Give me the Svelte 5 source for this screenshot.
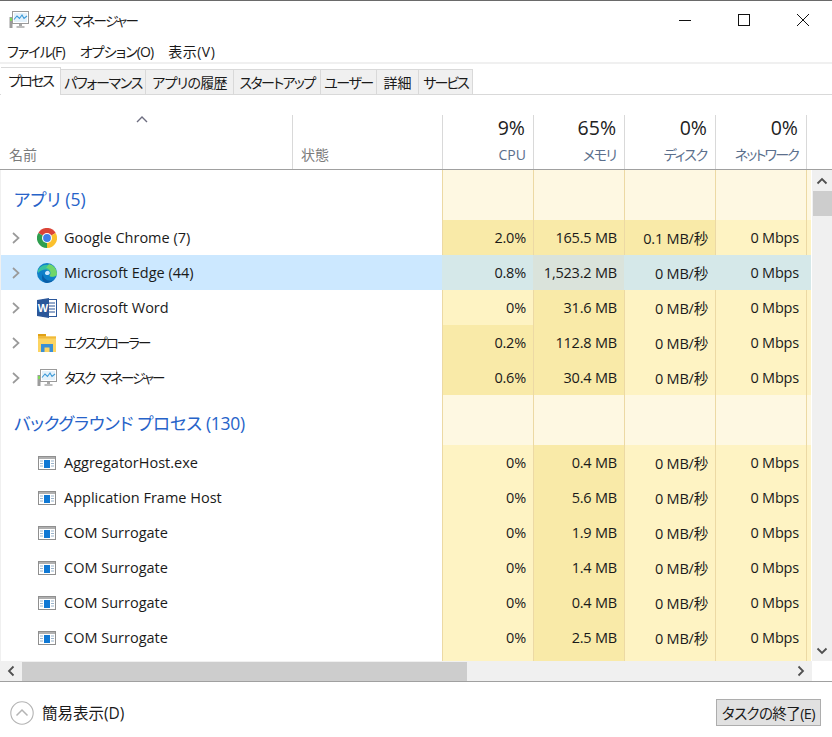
<script lang="ts">
  // widths and tracking per tab: the kana here run narrower than Noto's
  const tabs = [
    { label: "プロセス", width: 60, track: -2 },
    { label: "パフォーマンス", width: 85, track: -1.3 },
    { label: "アプリの履歴", width: 88, track: -0.7 },
    { label: "スタートアップ", width: 87, track: -1.6 },
    { label: "ユーザー", width: 56, track: -1.5 },
    { label: "詳細", width: 42, track: 0 },
    { label: "サービス", width: 54, track: -2 }
  ];

  const menus = [
    { label: "ファイル(F)", track: -0.9 },
    { label: "オプション(O)", track: -0.9 },
    { label: "表示(V)", track: 0.5 }
  ];

  const columns = [
    { pct: "9%", label: "CPU", track: 0, nudge: -1 },
    { pct: "65%", label: "メモリ", track: -1.3, nudge: 0 },
    { pct: "0%", label: "ディスク", track: -1.2, nudge: 0 },
    { pct: "0%", label: "ネットワーク", track: -1.8, nudge: 0 }
  ];

  const apps = [
    { name: "Google Chrome (7)", icon: "chrome", cpu: "2.0%", mem: "165.5 MB", disk: "0.1 MB/秒", hotCpu: true, hotDisk: true },
    { name: "Microsoft Edge (44)", icon: "edge", cpu: "0.8%", mem: "1,523.2 MB", disk: "0 MB/秒", selected: true },
    { name: "Microsoft Word", icon: "word", cpu: "0%", mem: "31.6 MB", disk: "0 MB/秒" },
    { name: "エクスプローラー", icon: "folder", cpu: "0.2%", mem: "112.8 MB", disk: "0 MB/秒", hotCpu: true, kana: true },
    { name: "タスク マネージャー", icon: "taskmgr", cpu: "0.6%", mem: "30.4 MB", disk: "0 MB/秒", hotCpu: true, kana: true }
  ];

  const background = [
    { name: "AggregatorHost.exe", mem: "0.4 MB" },
    { name: "Application Frame Host", mem: "5.6 MB" },
    { name: "COM Surrogate", mem: "1.9 MB" },
    { name: "COM Surrogate", mem: "1.4 MB" },
    { name: "COM Surrogate", mem: "0.4 MB" },
    { name: "COM Surrogate", mem: "2.5 MB" }
  ];
</script>

{#snippet taskIcon()}
  <svg width="20" height="20" viewBox="0 0 20 20">
    <rect x="3.5" y="1.5" width="16" height="12" fill="#fff" stroke="#9a9a9a" />
    <rect x="5" y="3" width="13" height="9" fill="#e3f1fb" />
    <polyline points="5,9.5 8,6 10.5,8.5 13,5 15,8.5 18,6" fill="none" stroke="#3c9ad8" stroke-width="1.1" />
    <rect x="10" y="14" width="3" height="2" fill="#a8a8a8" />
    <rect x="7.5" y="16" width="8" height="2" fill="#bdbdbd" />
    <rect x="0.5" y="7" width="3" height="11" fill="#9c9c9c" />
    <rect x="1" y="8" width="2" height="3" fill="#7ed957" />
  </svg>
{/snippet}

{#snippet appIcon(kind)}
  {#if kind === "chrome"}
    <svg width="20" height="20" viewBox="0 0 20 20">
      <path d="M10 10 L1.3 5 A10 10 0 0 1 18.7 5 Z" fill="#db4437" />
      <path d="M10 10 L18.7 5 A10 10 0 0 1 10 20 Z" fill="#fbc02d" />
      <path d="M10 10 L10 20 A10 10 0 0 1 1.3 5 Z" fill="#2e9e4f" />
      <circle cx="10" cy="10" r="5" fill="#fff" />
      <circle cx="10" cy="10" r="3.9" fill="#3f7fe8" />
    </svg>
  {:else if kind === "edge"}
    <svg width="20" height="20" viewBox="0 0 20 20">
      <circle cx="10" cy="10" r="10" fill="#0f7fc9" />
      <path d="M1 7 A10 10 0 0 1 19.8 11.5 C19 14 14 14.5 12.5 13 C15 11 13 6.5 9 6.5 C5.5 6.5 3 8 1 10 Z" fill="#35c1a0" />
      <path d="M12 1 A10 10 0 0 1 20 11 C19.5 13.5 15 14.5 12.5 13 C15 10 13 5 9 5 Z" fill="#6fd66a" />
      <path d="M8 10.5 C8 8.5 10 7.5 11.5 8 C13 8.7 13.3 10.5 12 11.5 C10.5 12.5 8 12 8 10.5 Z" fill="#cce8ff" />
      <path d="M6 11 C6 16 11 19 17 17 A10 10 0 0 1 10 20 C6 20 3.5 15 6 11 Z" fill="#0a5ea8" />
    </svg>
  {:else if kind === "word"}
    <svg width="20" height="20" viewBox="0 0 20 20">
      <rect x="6" y="1.5" width="13.5" height="17" fill="#fff" stroke="#2b579a" />
      <path d="M12 5h6M12 8h6M12 11h6M12 14h6" stroke="#2b579a" stroke-width="1.2" />
      <path d="M0 2 L12 0 V20 L0 18 Z" fill="#2b579a" />
      <text x="6" y="14" class="word-letter" text-anchor="middle">W</text>
    </svg>
  {:else if kind === "folder"}
    <svg width="20" height="20" viewBox="0 0 20 20">
      <rect x="1" y="1" width="8" height="4" fill="#e0a116" />
      <rect x="1" y="3.5" width="18" height="15.5" fill="#fcd462" />
      <rect x="1" y="3.5" width="18" height="2" fill="#f0b93a" />
      <path d="M4 15 V11 H16 V19 H12.5 V14.5 H7.5 V19 H4 Z" fill="#3a8fd6" />
    </svg>
  {:else if kind === "taskmgr"}
    {@render taskIcon()}
  {:else}
    <svg width="18" height="14" viewBox="0 0 18 14">
      <rect x="0.5" y="0.5" width="17" height="13" fill="#fff" stroke="#8f8f8f" />
      <rect x="1" y="1" width="16" height="2" fill="#b0b0b0" />
      <rect x="6" y="4" width="6" height="8" fill="#0f78d4" />
      <path d="M2 5h3M2 7.5h3M2 10h3M13 5h3M13 7.5h3M13 10h3" stroke="#9ab4cc" />
    </svg>
  {/if}
{/snippet}

{#snippet cells(row, bg)}
  <div class="cell heat" class:hot={row.hotCpu} class:pale={bg === "group"} class:sel={row.selected}>{row.cpu ?? ""}</div>
  <div class="cell heat" class:hot={bg !== "group"} class:pale={bg === "group"} class:selmem={row.selected}>{row.mem ?? ""}</div>
  <div class="cell heat" class:hot={row.hotDisk} class:pale={bg === "group"} class:sel={row.selected}>{row.disk ?? ""}</div>
  <div class="cell heat" class:pale={bg === "group"} class:sel={row.selected}>{row.net ?? ""}</div>
  <div class="cell heat tail" class:pale={bg === "group"} class:sel={row.selected}></div>
{/snippet}

<div class="window">
  <header class="titlebar">
    <div class="title">
      {@render taskIcon()}
      <span>タスク マネージャー</span>
    </div>
    <div class="controls">
      <button aria-label="最小化"><svg width="12" height="12"><path d="M0 6.5h12" stroke="#111" /></svg></button>
      <button aria-label="最大化"><svg width="12" height="12"><rect x="0.5" y="0.5" width="11" height="11" fill="none" stroke="#111" /></svg></button>
      <button aria-label="閉じる"><svg width="12" height="12"><path d="M0 0l12 12M12 0L0 12" stroke="#111" /></svg></button>
    </div>
  </header>

  <nav class="menubar">
    {#each menus as m}
      <span style="letter-spacing: {m.track}px">{m.label}</span>
    {/each}
  </nav>

  <div class="tabs">
    {#each tabs as t, i}
      <div class="tab" class:active={i === 0} style="width: {t.width}px; letter-spacing: {t.track}px">{t.label}</div>
    {/each}
  </div>

  <div class="table-head">
    <div class="hcol name-col">
      <svg class="sort" width="12" height="7" viewBox="0 0 12 7"><path d="M1 6l5-5 5 5" fill="none" stroke="#6d6d80" stroke-width="1.4" /></svg>
      <span class="hlabel">名前</span>
    </div>
    <div class="hcol state-col"><span class="hlabel">状態</span></div>
    {#each columns as c}
      <div class="hcol metric">
        <span class="pct">{c.pct}</span>
        <span class="hlabel blue" style="letter-spacing: {c.track}px; margin-right: {c.nudge}px">{c.label}</span>
      </div>
    {/each}
    <div class="hend"></div>
  </div>

  <div class="body">
    <div class="list">
      <div class="row group">
        <div class="namecell gtitle">アプリ (5)</div>
        <div class="state"></div>
        {@render cells({}, "group")}
      </div>
      {#each apps as a}
        <div class="row app" class:selected={a.selected}>
          <div class="namecell">
            <svg class="chev" width="8" height="12" viewBox="0 0 8 12"><path d="M1 1l5.5 5L1 11" fill="none" stroke="#9a9a9a" stroke-width="1.7" /></svg>
            <span class="icon">{@render appIcon(a.icon)}</span>
            <span class:kana={a.kana}>{a.name}</span>
          </div>
          <div class="state"></div>
          {@render cells({ ...a, net: "0 Mbps" }, "row")}
        </div>
      {/each}
      <div class="row group">
        <div class="namecell gtitle tight">バックグラウンド プロセス (130)</div>
        <div class="state"></div>
        {@render cells({}, "group")}
      </div>
      {#each background as b}
        <div class="row app">
          <div class="namecell">
            <span class="chev-gap"></span>
            <span class="icon">{@render appIcon("generic")}</span>
            <span>{b.name}</span>
          </div>
          <div class="state"></div>
          {@render cells({ cpu: "0%", mem: b.mem, disk: "0 MB/秒", net: "0 Mbps" }, "row")}
        </div>
      {/each}
      <div class="row filler">
        <div class="namecell"></div>
        <div class="state"></div>
        {@render cells({}, "row")}
      </div>
    </div>

    <div class="vscroll">
      <svg class="arrow" width="12" height="8" viewBox="0 0 12 8"><path d="M1.5 6.5L6 2l4.5 4.5" fill="none" stroke="#505050" stroke-width="1.8" /></svg>
      <div class="vthumb"></div>
      <div class="grow"></div>
      <svg class="arrow" width="12" height="8" viewBox="0 0 12 8"><path d="M1.5 1.5L6 6l4.5-4.5" fill="none" stroke="#505050" stroke-width="1.8" /></svg>
    </div>
  </div>

  <div class="hscroll-row">
    <div class="hscroll">
      <svg class="harrow" width="8" height="12" viewBox="0 0 8 12"><path d="M6.5 1.5L2 6l4.5 4.5" fill="none" stroke="#505050" stroke-width="1.8" /></svg>
      <div class="hthumb"></div>
      <div class="grow"></div>
      <svg class="harrow" width="8" height="12" viewBox="0 0 8 12"><path d="M1.5 1.5L6 6l-4.5 4.5" fill="none" stroke="#505050" stroke-width="1.8" /></svg>
    </div>
  </div>

  <footer class="footer">
    <div class="fewer">
      <svg width="24" height="24" viewBox="0 0 24 24">
        <circle cx="12" cy="12" r="11.2" fill="none" stroke="#b4b4b4" stroke-width="1.1" />
        <path d="M6.5 14.5L12 9l5.5 5.5" fill="none" stroke="#b4b4b4" stroke-width="1.5" />
      </svg>
      <span>簡易表示(D)</span>
    </div>
    <button class="endtask">タスクの終了(E)</button>
  </footer>
</div>

<style>
  :global(body) {
    background: #fff;
    overflow: hidden;
  }

  .window {
    width: 832px;
    height: 737px;
    display: flex;
    flex-direction: column;
    font-family: "Open Sans", "Noto Sans CJK JP", sans-serif;
    font-feature-settings: "palt";
    font-size: 14.5px;
    color: #1a1a1a;
    background: #fff;
    overflow: hidden;
  }

  .titlebar {
    height: 38px;
    flex: none;
    display: flex;
    justify-content: space-between;
    border-top: 1px solid #6a6a6a;
  }

  .title {
    display: flex;
    align-items: center;
    gap: 5px;
    padding-left: 9px;
    font-size: 13.5px;
    letter-spacing: -1.5px;
    word-spacing: 4px;
  }

  .controls {
    display: flex;
  }

  .controls button {
    width: 59px;
    height: 38px;
    border: 0;
    padding: 0;
    background: none;
    display: flex;
    align-items: center;
    justify-content: center;
  }

  .menubar {
    height: 23px;
    flex: none;
    display: flex;
    align-items: center;
    gap: 15px;
    padding-left: 7px;
    font-size: 14px;
    border-bottom: 2px solid #f0f0f0;
  }

  .tabs {
    height: 31px;
    flex: none;
    display: flex;
    align-items: flex-end;
    padding-left: 1px;
    border-bottom: 1px solid #d9d9d9;
    box-sizing: border-box;
  }

  .tab {
    height: 25px;
    box-sizing: border-box;
    background: #f0f0f0;
    border: 1px solid #d9d9d9;
    border-left: 0;
    border-bottom: 0;
    display: flex;
    align-items: center;
    justify-content: center;
    font-size: 14px;
    white-space: nowrap;
  }

  .tab.active {
    height: 28px;
    background: #fff;
    margin-bottom: -1px;
    position: relative;
    padding-bottom: 4px;
  }

  .table-head {
    margin-top: 20px;
    height: 55px;
    flex: none;
    display: grid;
    grid-template-columns: 293px 150px 91px 91px 91px 91px 1fr;
    border-bottom: 1px solid #a0a0a0;
    box-sizing: border-box;
  }

  .hcol {
    border-right: 1px solid #d9d9d9;
    display: flex;
    flex-direction: column;
    justify-content: flex-end;
    position: relative;
    padding: 0 8px 5px 9px;
    white-space: nowrap;
  }

  .state-col {
    padding-left: 8px;
  }

  .sort {
    position: absolute;
    left: 136px;
    top: 1px;
  }

  .hlabel {
    font-size: 14px;
    color: #7b7b7b;
    line-height: 18px;
  }

  .hlabel.blue {
    color: #5b6f8c;
  }

  .metric {
    align-items: flex-end;
  }

  .pct {
    font-size: 19.5px;
    line-height: 26px;
    margin-bottom: 5px;
    color: #222;
  }

  .body {
    height: 491px;
    flex: none;
    display: flex;
  }

  .list {
    width: 812px;
    flex: none;
    display: flex;
    flex-direction: column;
    overflow: hidden;
    border-left: 1px solid #f0f0f0;
    box-sizing: border-box;
  }

  .row {
    display: grid;
    grid-template-columns: 291px 150px 91px 91px 91px 91px 5px;
    flex: none;
  }

  .row.group {
    height: 50px;
  }

  .row.app {
    height: 35px;
  }

  .row.filler {
    flex: 1;
  }

  .row.selected .namecell,
  .row.selected .state {
    background: #cce8ff;
  }

  .namecell {
    display: flex;
    align-items: center;
    white-space: nowrap;
    padding-left: 9px;
  }

  .kana {
    font-size: 13.5px;
    letter-spacing: -1.9px;
    word-spacing: 4px;
    margin-top: -2px;
  }

  .gtitle {
    padding-left: 13px;
    padding-top: 6px;
    font-size: 17.5px;
    color: #2763c9;
  }

  .gtitle.tight {
    padding-top: 5px;
    letter-spacing: -0.3px;
  }

  .chev {
    width: 8px;
    margin-left: 2px;
    margin-right: 17px;
    flex: none;
  }

  .chev-gap {
    width: 27px;
    flex: none;
  }

  .icon {
    width: 20px;
    margin-right: 7px;
    display: flex;
    align-items: center;
    justify-content: center;
    flex: none;
  }

  .cell {
    display: flex;
    align-items: center;
    justify-content: flex-end;
    padding-right: 7px;
    border-left: 1px solid #ecd9a4;
    letter-spacing: -0.2px;
    white-space: nowrap;
  }

  .tail {
    padding: 0;
  }

  .heat {
    background: #fef3c3;
  }

  .heat.hot {
    background: #f9eaa8;
  }

  .heat.pale {
    background: #fef8e2;
  }

  .heat.sel {
    background: #d5e8e9;
    border-left-color: transparent;
  }

  .heat.selmem {
    background: #dae3db;
    border-left-color: transparent;
  }

  .vscroll {
    flex: 1;
    background: #f0f0f0;
    display: flex;
    flex-direction: column;
    align-items: center;
  }

  .arrow {
    margin: 7px 0 6px;
    flex: none;
  }

  .vthumb {
    width: 19px;
    height: 25px;
    background: #cdcdcd;
    flex: none;
  }

  .grow {
    flex: 1;
  }

  .hscroll-row {
    height: 20px;
    flex: none;
    display: flex;
    border-bottom: 1px solid #a0a0a0;
  }

  .hscroll {
    width: 812px;
    height: 20px;
    background: #f0f0f0;
    display: flex;
    align-items: center;
  }

  .harrow {
    flex: none;
    margin: 0 7px;
  }

  .hthumb {
    width: 445px;
    height: 19px;
    background: #cdcdcd;
    flex: none;
  }

  .footer {
    flex: 1;
    display: flex;
    align-items: center;
    justify-content: space-between;
    padding: 6px 11px 0 10px;
  }

  .fewer {
    display: flex;
    align-items: center;
    gap: 8px;
    font-size: 15.5px;
  }

  .endtask {
    width: 105px;
    height: 27px;
    background: #e1e1e1;
    border: 1px solid #adadad;
    padding: 0;
    font: inherit;
    font-size: 14.5px;
    letter-spacing: -0.6px;
    color: #1a1a1a;
    white-space: nowrap;
  }

  .word-letter {
    font-family: "Liberation Sans", sans-serif;
    font-size: 11px;
    font-weight: 700;
    fill: #fff;
  }
</style>
